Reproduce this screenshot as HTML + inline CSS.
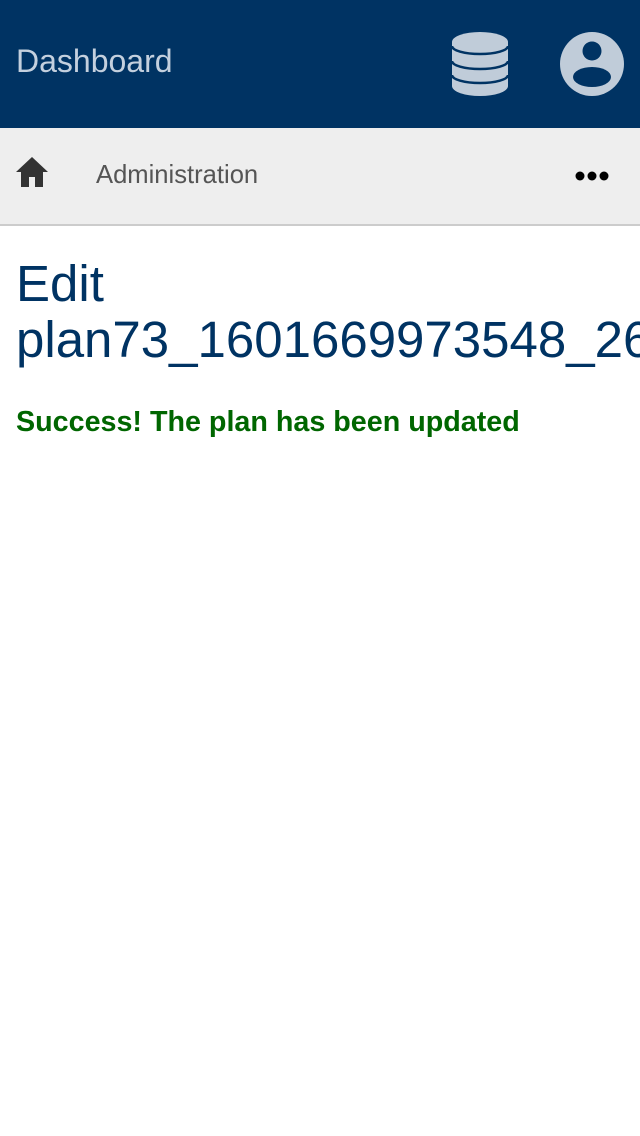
<!DOCTYPE html>
<html><head><style>
body{margin:0;width:640px;height:1136px;background:#fff;font-family:"Liberation Sans",sans-serif;overflow:hidden;position:relative}
.top{position:absolute;left:0;top:0;width:640px;height:128px;background:#003363}
.top .t{position:absolute;left:16px;top:43px;font-size:32px;color:#c4d0de}
.bar{position:absolute;left:0;top:128px;width:640px;height:96px;background:#eeeeee;border-bottom:2px solid #cccccc}
h1{position:absolute;left:16px;top:256px;margin:0;font-weight:normal;font-size:51px;line-height:56px;color:#003363;white-space:nowrap}
.s{position:absolute;left:16px;top:406px;font-size:28.7px;font-weight:bold;color:#006600}
</style></head><body>
<div class="top"><div class="t">Dashboard</div>
<svg style="position:absolute;left:0;top:0" width="640" height="128">
<g fill="#c0ccd9">
<path d="M452 42 A28 10 0 0 1 508 42 V86 A28 10 0 0 1 452 86Z"/>
<circle cx="592" cy="64" r="32"/>
</g>
<g fill="none" stroke="#003363" stroke-width="2.5">
<path d="M452 46 A28 8 0 0 0 508 46"/>
<path d="M452 61 A28 8 0 0 0 508 61"/>
<path d="M452 75 A28 8 0 0 0 508 75"/>
</g>
<circle cx="592" cy="51" r="9.5" fill="#003363"/>
<ellipse cx="592" cy="77" rx="19" ry="10" fill="#003363"/>
</svg></div>
<div class="bar"></div>
<div style="position:absolute;left:96px;top:161px;font-size:25.6px;color:#555">Administration</div>
<svg style="position:absolute;left:0;top:128px" width="640" height="96">
<path d="M32 29 L16 44 H21 V59 H29 V49 H35 V59 H43 V44 H48Z" fill="#333"/>
<circle cx="580" cy="48" r="4.5" fill="#000"/><circle cx="592" cy="48" r="4.5" fill="#000"/><circle cx="604" cy="48" r="4.5" fill="#000"/>
</svg>
<h1>Edit<br>plan73_1601669973548_26</h1>
<div class="s">Success! The plan has been updated</div>
</body></html>
